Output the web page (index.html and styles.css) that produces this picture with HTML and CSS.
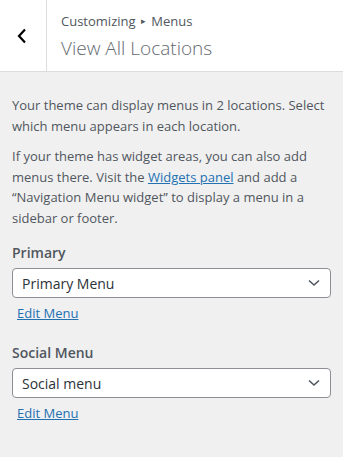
FILE: index.html
```html
<!DOCTYPE html>
<html lang="en">
  <head>
    <meta charset="UTF-8" />
    <meta name="viewport" content="width=device-width, initial-scale=1.0" />
    <title>Menus</title>
    <link rel="stylesheet" href="styles.css">
  </head>
  <body>
    <!-- Panel header -->
    <div class="panel-header">
      <button class="back-button" aria-label="Back">
        <svg width="10" height="16" viewBox="0 0 10 16">
          <path d="M8 1.5 L2 8 L8 14.5" fill="none" stroke="#000" stroke-width="2.2" />
        </svg>
      </button>
      <div class="panel-title">
        <span class="breadcrumb">Customizing <span class="sep">&#9656;</span> Menus</span>
        <h3>View All Locations</h3>
      </div>
    </div>

    <!-- Panel body -->
    <div class="panel-body">
      <p class="description">Your theme can display menus in 2 locations. Select which menu appears in each location.</p>
      <p class="description">If your theme has widget areas, you can also add menus there. Visit the <a href="#">Widgets panel</a> and add a &ldquo;Navigation Menu widget&rdquo; to display a menu in a sidebar or footer.</p>

      <div class="location">
        <label for="primary">Primary</label>
        <div class="select-wrap">
          <select id="primary">
            <option>Primary Menu</option>
          </select>
        </div>
        <a href="#" class="edit-menu">Edit Menu</a>
      </div>

      <div class="location">
        <label for="social">Social Menu</label>
        <div class="select-wrap">
          <select id="social">
            <option>Social menu</option>
          </select>
        </div>
        <a href="#" class="edit-menu">Edit Menu</a>
      </div>
    </div>
  </body>
</html>
```

FILE: styles.css
```css
/* Base */
body {
  margin: 0;
  background: #f0f0f1;
  font-family: "Segoe UI", "Open Sans", sans-serif;
  font-size: 13px;
  color: #3c434a;
}

/* Header */
.panel-header {
  display: flex;
  height: 71px;
  background: #fff;
  border-bottom: 1px solid #dcdcde;
}
.back-button {
  width: 47px;
  border: none;
  border-right: 1px solid #dcdcde;
  background: #fff;
  padding: 0 3px 0 0;
  display: flex;
  align-items: center;
  justify-content: center;
}
.panel-title {
  padding: 12px 0 0 14px;
}
.breadcrumb {
  display: block;
  font-size: 13px;
  line-height: 18px;
  color: #50575e;
}
.breadcrumb .sep {
  font-size: 9px;
  vertical-align: 2px;
  margin: 0 2px;
}
.panel-title h3 {
  margin: 5px 0 0;
  font-size: 19px;
  font-weight: 300;
  line-height: 26px;
  color: #646970;
}

/* Body */
.panel-body {
  padding: 23px 12px 0;
}
.description {
  margin: 0 0 10px;
  line-height: 20.5px;
  color: #50575e;
}
.description a,
.edit-menu {
  color: #2271b1;
  text-decoration: underline;
}

.location {
  margin-top: 15px;
}
.location + .location {
  margin-top: 21px;
}
.location label {
  display: block;
  font-size: 14px;
  font-weight: 600;
  color: #50575e;
  margin-bottom: 6px;
}
.select-wrap select {
  width: 100%;
  height: 30px;
  padding: 0 24px 0 9px;
  font-family: inherit;
  font-size: 14px;
  color: #2c3338;
  background: #fff url("data:image/svg+xml;utf8,<svg xmlns='http://www.w3.org/2000/svg' width='12' height='8' viewBox='0 0 12 8'><path d='M1 1.5 L6 6 L11 1.5' fill='none' stroke='%2350575e' stroke-width='1.6'/></svg>") no-repeat right 10px center;
  border: 1px solid #8c8f94;
  border-radius: 4px;
  appearance: none;
  -webkit-appearance: none;
}
.edit-menu {
  display: inline-block;
  margin: 6px 0 0 5px;
  font-size: 13px;
}
```
